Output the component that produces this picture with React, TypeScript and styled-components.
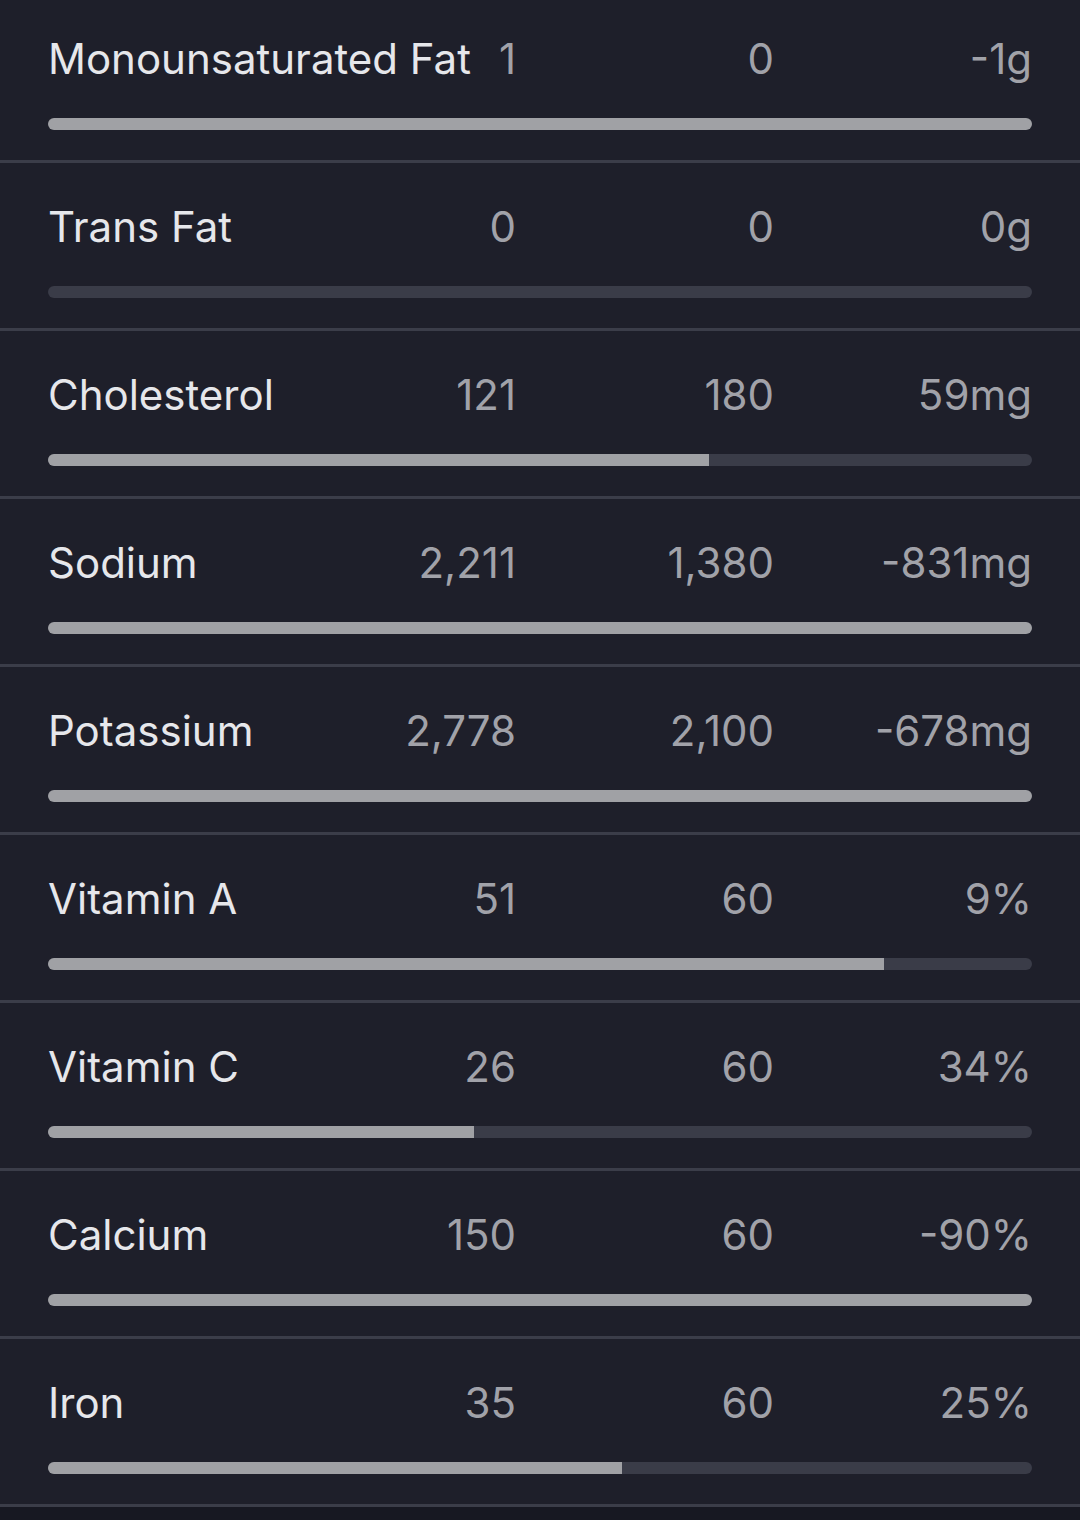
import styled, { createGlobalStyle } from "styled-components";

const GlobalStyle = createGlobalStyle`
  body {
    margin: 0;
    background: #171822;
    font-family: Inter, "Noto Sans", sans-serif;
  }
`;

const List = styled.div`
  background: #1e1f2a;
  margin-top: -5px;
`;

const Row = styled.div`
  padding: 39px 48px 30px;
  border-bottom: 3px solid #3b3d49;
`;

const Line = styled.div`
  display: grid;
  grid-template-columns: minmax(0, 1fr) 258px 258px 258px;
  align-items: center;
  height: 50px;
  margin-bottom: 34px;
  font-size: 42px;
  line-height: 50px;
`;

const Label = styled.span`
  color: #e6e7eb;
  white-space: nowrap;
  overflow: visible;
`;

const Value = styled.span`
  color: #a1a2a9;
  text-align: right;
`;

const Track = styled.div`
  height: 12px;
  border-radius: 6px;
  background: #3a3c48;
  overflow: hidden;
`;

const Fill = styled.div`
  height: 100%;
  background: #a0a1a5;
`;

interface INutrient {
  name: string;
  amount: string;
  goal: string;
  left: string;
  ratio: number;
}

const nutrients: INutrient[] = [
  { name: "Monounsaturated Fat", amount: "1", goal: "0", left: "-1g", ratio: 1 },
  { name: "Trans Fat", amount: "0", goal: "0", left: "0g", ratio: 0 },
  { name: "Cholesterol", amount: "121", goal: "180", left: "59mg", ratio: 121 / 180 },
  { name: "Sodium", amount: "2,211", goal: "1,380", left: "-831mg", ratio: 1 },
  { name: "Potassium", amount: "2,778", goal: "2,100", left: "-678mg", ratio: 1 },
  { name: "Vitamin A", amount: "51", goal: "60", left: "9%", ratio: 51 / 60 },
  { name: "Vitamin C", amount: "26", goal: "60", left: "34%", ratio: 26 / 60 },
  { name: "Calcium", amount: "150", goal: "60", left: "-90%", ratio: 1 },
  { name: "Iron", amount: "35", goal: "60", left: "25%", ratio: 35 / 60 },
];

const App = () => {
  return (
    <>
      <GlobalStyle />
      <List>
        {nutrients.map((n) => (
          <Row key={n.name}>
            <Line>
              <Label>{n.name}</Label>
              <Value>{n.amount}</Value>
              <Value>{n.goal}</Value>
              <Value>{n.left}</Value>
            </Line>
            <Track>
              <Fill style={{ width: `${n.ratio * 100}%` }} />
            </Track>
          </Row>
        ))}
      </List>
    </>
  );
};
export default App;
